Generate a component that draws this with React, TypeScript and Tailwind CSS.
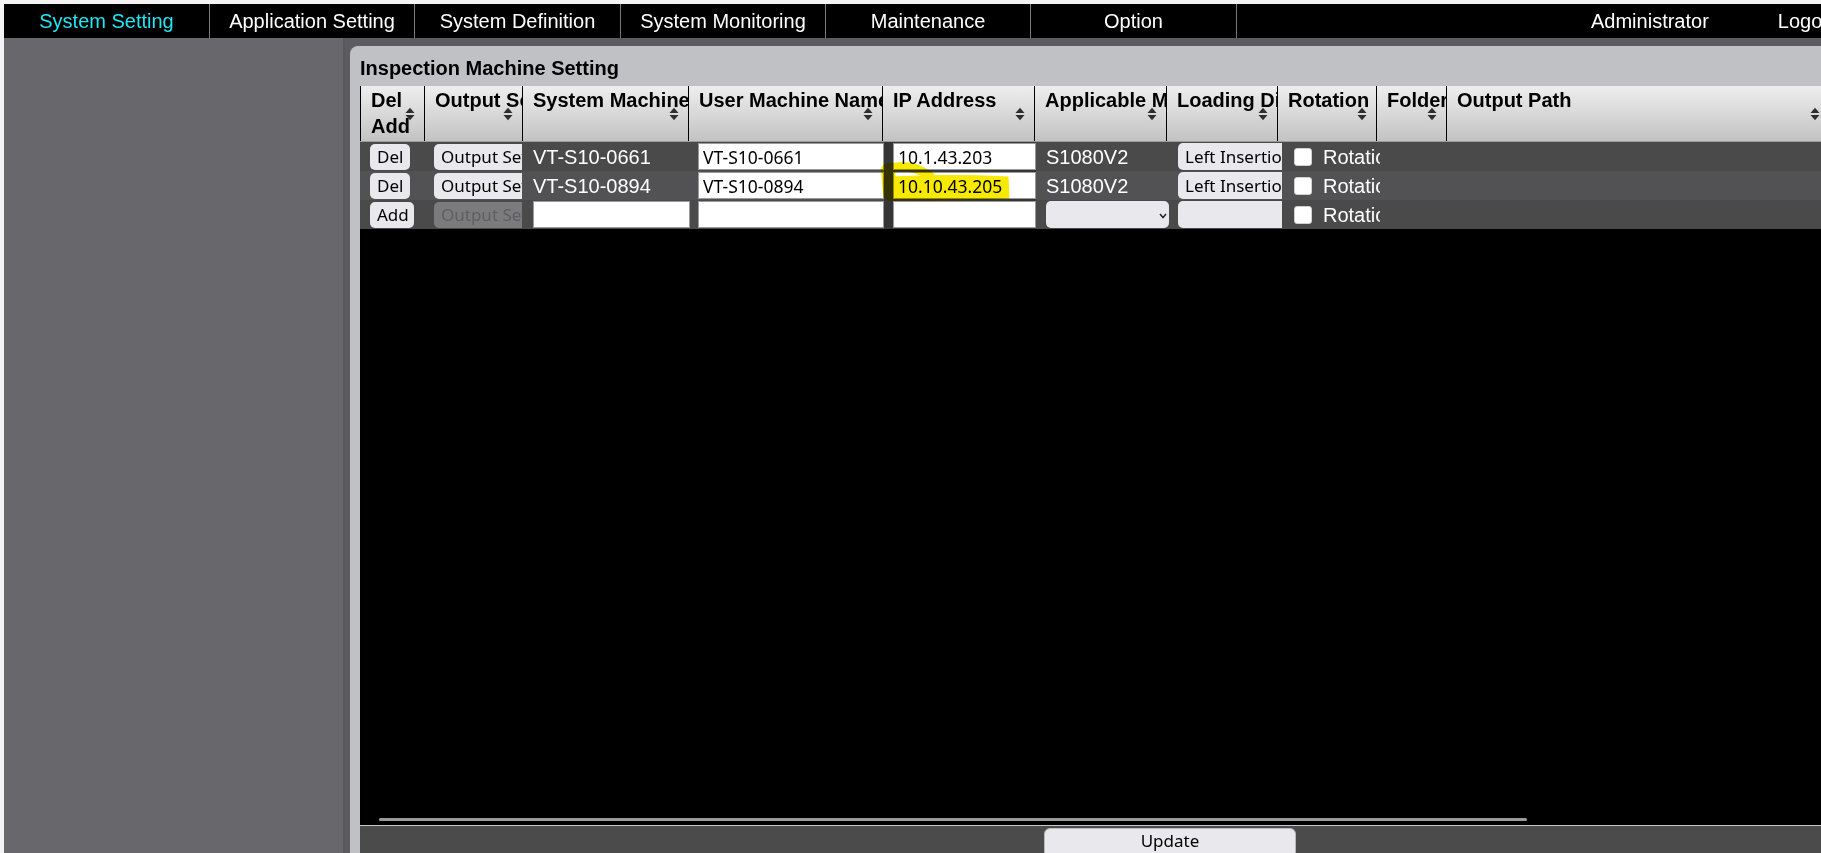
import React from "react";

// Inspection machine list (System Setting > Inspection Machine Setting)

const TEXT = "font-['Liberation_Sans',Arial,sans-serif]";
const UI = "font-['Noto_Sans','Open_Sans',sans-serif]";

const TABS: { label: string; w: string; active?: boolean }[] = [
  { label: "System Setting", w: "w-[206px]", active: true },
  { label: "Application Setting", w: "w-[205px]" },
  { label: "System Definition", w: "w-[206px]" },
  { label: "System Monitoring", w: "w-[205px]" },
  { label: "Maintenance", w: "w-[205px]" },
  { label: "Option", w: "w-[206px]" },
];

const HEADERS: string[][] = [
  ["Del", "Add"],
  ["Output Setting"],
  ["System Machine Name"],
  ["User Machine Name"],
  ["IP Address"],
  ["Applicable Model"],
  ["Loading Direction"],
  ["Rotation"],
  ["Folder"],
  ["Output Path"],
];

type Machine = { sys: string; user: string; ip: string; model: string; load: string };

const MACHINES: Machine[] = [
  { sys: "VT-S10-0661", user: "VT-S10-0661", ip: "10.1.43.203", model: "S1080V2", load: "Left Insertion" },
  { sys: "VT-S10-0894", user: "VT-S10-0894", ip: "10.10.43.205", model: "S1080V2", load: "Left Insertion" },
];

const BODY_COLS = "grid grid-cols-[64px_98px_170px_192px_152px_134px_112px_98px_1fr]";

function SortIcon() {
  return (
    <svg width="10" height="14" viewBox="0 0 10 14" className="absolute right-[9px] top-1/2 -translate-y-1/2">
      <polygon points="0.5,6 5,0.8 9.5,6" fill="#2e2e2e" />
      <polygon points="0.5,8 9.5,8 5,13.2" fill="#2e2e2e" />
    </svg>
  );
}

function Btn({ children, disabled, className = "" }: { children: React.ReactNode; disabled?: boolean; className?: string }) {
  return (
    <button
      disabled={disabled}
      className={`h-[26px] shrink-0 rounded-[5px] px-[7px] whitespace-nowrap text-[17px] leading-none ${UI} ${
        disabled ? "bg-[#7b7b7d] text-[#5f5f61]" : "bg-[#e9e9ed] text-black"
      } ${className}`}
    >
      {children}
    </button>
  );
}

function Field({ value = "", w }: { value?: string; w: string }) {
  return (
    <input
      readOnly
      value={value}
      className={`${w} h-[27px] shrink-0 bg-white border border-[#9a9a9a] px-[4px] text-[17.5px] text-black outline-none ${UI}`}
    />
  );
}

function Check() {
  return <span className="w-[18px] h-[18px] shrink-0 rounded-[3px] bg-white border border-[#d0d0d0]" />;
}

function Row({ m, bg }: { m?: Machine; bg: string }) {
  const cell = "flex items-center overflow-hidden whitespace-nowrap";
  return (
    <div className={`${BODY_COLS} h-[29px] ${bg}`}>
      <div className={`${cell} pl-[10px]`}>
        {m ? <Btn className="w-[40px] px-0">Del</Btn> : <Btn className="w-[44px] px-0">Add</Btn>}
      </div>
      <div className={`${cell} pl-[10px]`}>
        <Btn disabled={!m}>Output Setting</Btn>
      </div>
      <div className={`${cell} pl-[11px] text-white text-[20px] ${TEXT}`}>
        {m ? m.sys : <Field w="w-[157px]" />}
      </div>
      <div className={`${cell} pl-[6px]`}>
        <Field value={m?.user} w="w-[186px]" />
      </div>
      <div className={`${cell} pl-[9px] bg-[#363636]`}>
        <Field value={m?.ip} w="w-[143px]" />
      </div>
      <div className={`${cell} pl-[10px] text-white text-[20px] ${TEXT}`}>
        {m ? (
          m.model
        ) : (
          <div className="relative w-[123px] h-[27px] rounded-[5px] bg-[#e9e9ed]">
            <svg width="8" height="6" viewBox="0 0 8 6" className="absolute right-[2px] top-[12px]">
              <polyline points="1,1 4,4.5 7,1" fill="none" stroke="#222" strokeWidth="1.5" />
            </svg>
          </div>
        )}
      </div>
      <div className={`${cell} pl-[8px]`}>
        <div className={`w-[130px] h-[27px] shrink-0 rounded-[5px] bg-[#e9e9ed] pl-[7px] text-[17px] leading-[27px] text-black ${UI}`}>
          {m ? m.load : ""}
        </div>
      </div>
      <div className={`${cell} pl-[12px] gap-[11px] text-white text-[20px] ${TEXT}`}>
        <Check />
        <span>Rotation</span>
      </div>
      <div />
    </div>
  );
}

export default function App() {
  return (
    <div className={`relative w-[1821px] h-[853px] overflow-hidden bg-[#f3f3f3] pt-[4px] pl-[4px] flex flex-col ${TEXT}`}>
      <nav className="h-[34px] shrink-0 bg-black flex text-[20px] overflow-hidden">
        {TABS.map((t) => (
          <div
            key={t.label}
            className={`${t.w} shrink-0 h-full flex items-center justify-center border-r border-[#7a7a7a] ${
              t.active ? "text-[#1fe5f2]" : "text-white"
            }`}
          >
            {t.label}
          </div>
        ))}
        <div className="flex-1 min-w-0 flex items-center text-white whitespace-nowrap">
          <span className="ml-[354px] shrink-0">Administrator</span>
          <span className="ml-[69px] shrink-0">Logout</span>
        </div>
      </nav>

      <div className="flex flex-1 min-h-0">
        <aside className="w-[341px] shrink-0 bg-[#68676c] border-r-2 border-[#57575c]" />

        <main className="flex-1 min-w-0 bg-[#5c5b60] pt-[8px] pl-[5px]">
          <section className="h-full bg-[#c0c1c5] rounded-tl-[8px] pl-[10px] flex flex-col">
            <h1 className="h-[40px] shrink-0 pt-[10px] leading-[24px] text-[20px] font-bold text-black">
              Inspection Machine Setting
            </h1>

            <div className="flex-1 min-h-0 bg-black flex flex-col overflow-hidden">
              <div className="h-[56px] shrink-0 grid grid-cols-[64px_98px_166px_194px_152px_132px_111px_99px_70px_383px] bg-[linear-gradient(#eeeeee,#c3c3c3)] border-b border-[#9c9c9c]">
                {HEADERS.map((h) => (
                  <div
                    key={h.join(" ")}
                    className="relative h-full border-l border-black pl-[10px] pt-[1px] overflow-hidden whitespace-nowrap text-[20px] leading-[26px] font-bold text-black"
                  >
                    {h.map((line) => (
                      <div key={line}>{line}</div>
                    ))}
                    <SortIcon />
                  </div>
                ))}
              </div>

              <Row m={MACHINES[0]} bg="bg-[#4a4a4a]" />
              <Row m={MACHINES[1]} bg="bg-[#525254]" />
              <Row bg="bg-[#4a4a4a]" />

              {/* empty grid area with the horizontal scroll thumb at its foot */}
              <div className="flex-1 flex flex-col justify-end pb-[4px]">
                <div className="ml-[19px] w-[1148px] h-[3px] rounded-full bg-[#9b9b9b]" />
              </div>

              <footer className="h-[28px] shrink-0 border-t border-[#c9c9c9] bg-[#4b4b4b] pt-[2px] overflow-hidden">
                <button className={`ml-[684px] w-[252px] h-[30px] rounded-[6px] bg-[#e9e9ed] border border-[#b8b8bc] text-[17px] leading-[24px] text-black flex justify-center ${UI}`}>
                  Update
                </button>
              </footer>
            </div>
          </section>
        </main>
      </div>

      {/* marker stroke over the second IP address */}
      <svg
        width="136"
        height="46"
        viewBox="0 0 136 46"
        className="absolute left-[880px] top-[160px] mix-blend-multiply pointer-events-none"
      >
        <g fill="#f7ea00" stroke="#f7ea00" strokeLinecap="round" strokeLinejoin="round">
          <path d="M14 17 C50 15 95 15 128 17 L129 38 C95 40 50 40 12 40 Z" />
          <path d="M8 10 L10 34" strokeWidth="14" fill="none" />
          <path d="M7 9 C22 4 36 6 50 16" strokeWidth="9" fill="none" />
        </g>
      </svg>
    </div>
  );
}
